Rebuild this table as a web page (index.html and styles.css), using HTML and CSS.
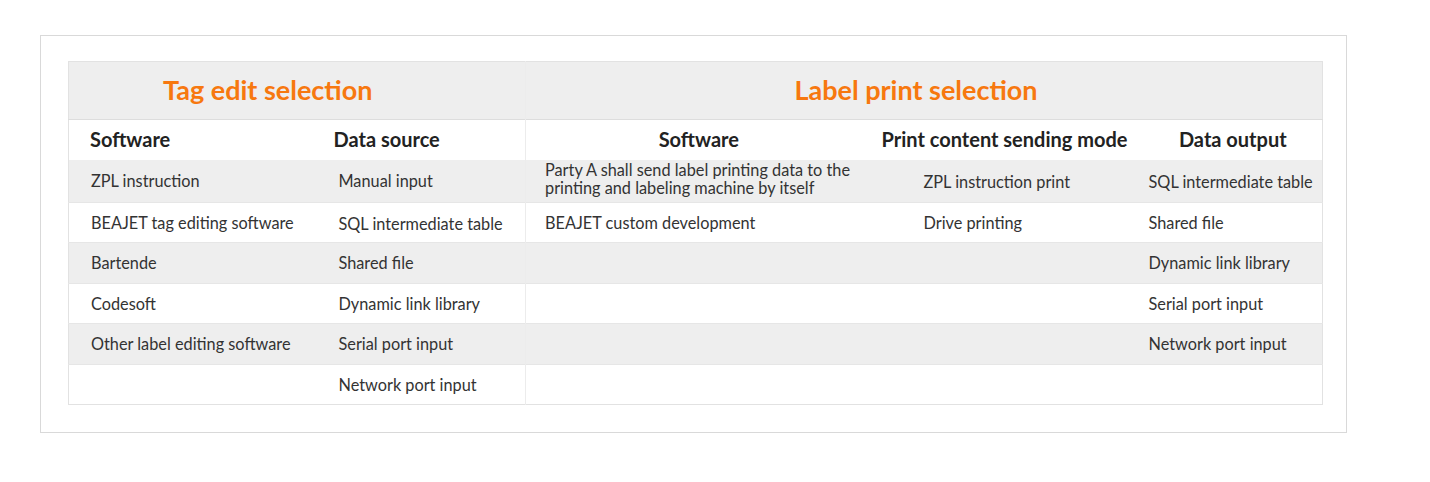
FILE: index.html
```html
<!DOCTYPE html>
<html lang="en">
<head>
<meta charset="utf-8">
<title>Label selection</title>
<link rel="stylesheet" href="styles.css">
</head>
<body>
<div class="box">
  <table class="sel">
    <colgroup>
      <col class="c1"><col class="c2"><col class="c3"><col class="c4"><col class="c5">
    </colgroup>
    <tr class="title">
      <th colspan="2" class="t-left">Tag edit selection</th>
      <th colspan="3" class="t-right divide">Label print selection</th>
    </tr>
    <tr class="head">
      <th class="h-l1">Software</th>
      <th class="h-l2">Data source</th>
      <th class="h-c divide">Software</th>
      <th class="h-c h-mode">Print content sending mode</th>
      <th class="h-c">Data output</th>
    </tr>
    <tr class="grey r1">
      <td class="l1">ZPL instruction</td>
      <td class="l2">Manual input</td>
      <td class="r-1 divide two">Party A shall send label printing data to the<br>printing and labeling machine by itself</td>
      <td class="r-2 low">ZPL instruction print</td>
      <td class="r-3 low">SQL intermediate table</td>
    </tr>
    <tr class="r2">
      <td class="l1">BEAJET tag editing software</td>
      <td class="l2 low">SQL intermediate table</td>
      <td class="r-1 divide">BEAJET custom development</td>
      <td class="r-2">Drive printing</td>
      <td class="r-3">Shared file</td>
    </tr>
    <tr class="grey r3">
      <td class="l1">Bartende</td>
      <td class="l2">Shared file</td>
      <td class="divide"></td>
      <td></td>
      <td class="r-3">Dynamic link library</td>
    </tr>
    <tr class="r4">
      <td class="l1">Codesoft</td>
      <td class="l2">Dynamic link library</td>
      <td class="divide"></td>
      <td></td>
      <td class="r-3">Serial port input</td>
    </tr>
    <tr class="grey r5">
      <td class="l1">Other label editing software</td>
      <td class="l2">Serial port input</td>
      <td class="divide"></td>
      <td></td>
      <td class="r-3">Network port input</td>
    </tr>
    <tr class="r6">
      <td class="l1"></td>
      <td class="l2">Network port input</td>
      <td class="divide"></td>
      <td></td>
      <td></td>
    </tr>
  </table>
</div>
</body>
</html>
```
FILE: styles.css
```css
html, body {
  margin: 0;
  padding: 0;
  background: #fff;
}
body {
  font-family: Lato, "Liberation Sans", sans-serif;
  color: #333;
  padding: 35px 0 0 40px;
}
.box {
  width: 1307px;
  height: 398px;
  border: 1px solid #d9d9d9;
  padding: 25px 0 0 27px;
  box-sizing: border-box;
}
.sel {
  border-collapse: collapse;
  table-layout: fixed;
  width: 1254px;
  border: 1px solid #e2e2e2;
}
.c1 { width: 248px; }
.c2 { width: 209px; }
.c3 { width: 346px; }
.c4 { width: 272px; }
.c5 { width: 179px; }

th, td {
  padding: 0;
  font-size: 16.3px;
  line-height: 18px;
  text-align: left;
  vertical-align: middle;
  white-space: nowrap;
}
.divide { border-left: 1px solid #ececec; }

.title { height: 58px; background: #eeeeee; border-bottom: 1px solid #dddddd; }
.title th {
  color: #f7780f;
  font-size: 27px;
  font-weight: 700;
  padding-bottom: 1px;
}
.t-left { padding-left: 94px !important; }
.t-right { text-align: center !important; padding-right: 16px !important; }

.head { height: 40px; background: #fff; }
.head th {
  color: #222;
  font-size: 20px;
  font-weight: 700;
  padding-bottom: 2px;
}
.h-l1 { padding-left: 21px !important; }
.h-l2 { padding-left: 17px !important; }
.h-c { text-align: center !important; }
.h-mode { padding-right: 6px !important; }

tr.grey { background: #eeeeee; }
.r1 { height: 43px; }
.r2 { height: 40px; }
.r3 { height: 41px; }
.r4 { height: 40px; }
.r5 { height: 41px; }
.r6 { height: 40px; }
.r2, .r3, .r4, .r5, .r6 { border-top: 1px solid #e6e6e6; }

.l1 { padding-left: 22px; }
.l2 { padding-left: 22px; }
.r-1 { padding-left: 19px; }
.r-2 { padding-left: 52px; }
.r-3 { padding-left: 5px; }
.two { padding-bottom: 4px; }
.low { padding-top: 3px; }
```
